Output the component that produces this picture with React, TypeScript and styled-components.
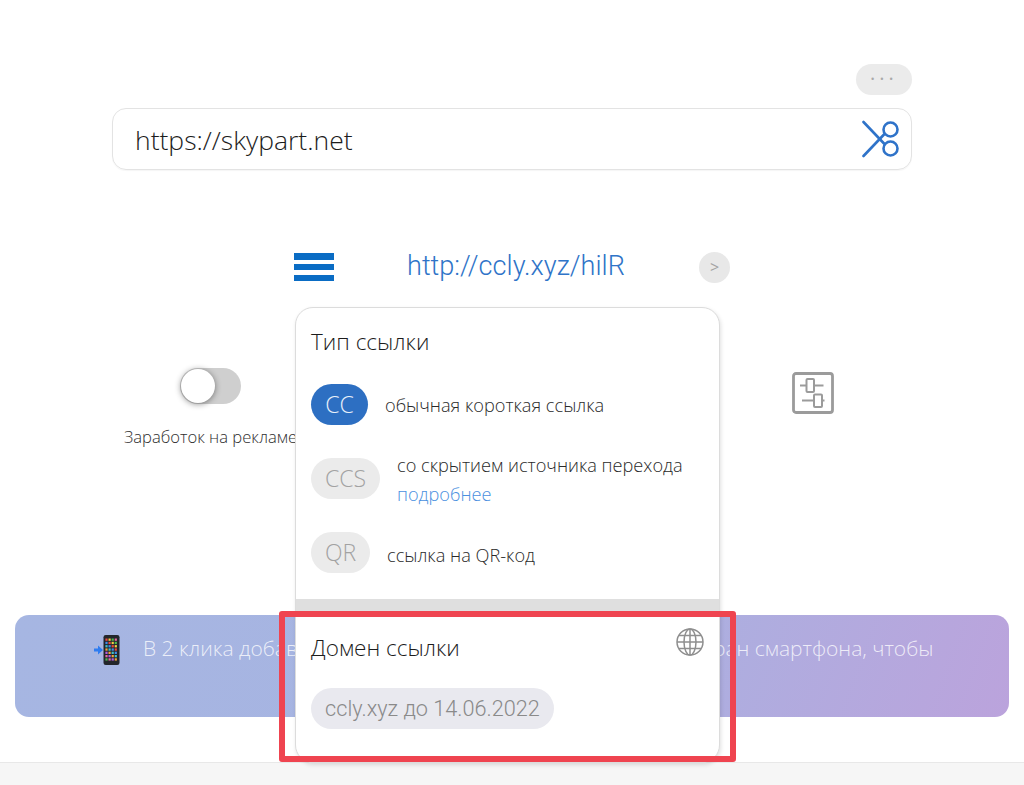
import React from 'react';
import styled, { createGlobalStyle } from 'styled-components';

const GlobalStyle = createGlobalStyle`
  html, body {
    margin: 0;
    padding: 0;
    background: #ffffff;
    font-family: "Open Sans", "Liberation Sans", sans-serif;
    font-weight: 300;
  }
  * {
    box-sizing: border-box;
  }
`

const ScissorsIcon = () => (
  <svg width="38" height="38" viewBox="0 0 38 38" fill="none" stroke="#2f73c9" strokeWidth="2.6" strokeLinecap="round">
    <path d="M1.5 2 L22 23.5" />
    <path d="M1.5 36 L22 14.5" />
    <circle cx="28.5" cy="9.5" r="7" />
    <circle cx="28.5" cy="28.5" r="7" />
  </svg>
)

const SlidersIcon = () => (
  <svg width="42" height="42" viewBox="0 0 42 42" fill="none" stroke="#9b9b9b">
    <rect x="1.5" y="1.5" width="39" height="39" rx="2.5" strokeWidth="2.8" />
    <path d="M8 13.5 H14.5 M22 13.5 H31.5 M10 28.5 H22 M30 28.5 H32.5" strokeWidth="2" />
    <rect x="14.5" y="7" width="7.5" height="13" rx="1" strokeWidth="2" />
    <rect x="22" y="22.5" width="8" height="12.5" rx="1" strokeWidth="2" />
  </svg>
)

const GlobeIcon = () => (
  <svg width="28" height="28" viewBox="0 0 28 28" fill="none" stroke="#8f8f8f" strokeWidth="1.5">
    <circle cx="14" cy="14" r="13" />
    <ellipse cx="14" cy="14" rx="6" ry="13" />
    <path d="M14 1 V27 M1 14 H27 M3 7.5 H25 M3 20.5 H25" />
  </svg>
)

const PhoneEmoji = () => {
  const colors = ['#e8483f', '#f2a33a', '#4fb84f', '#3f8be8', '#b05ce0', '#f0d040', '#40c0c8', '#e86aa0']
  const cells = []
  for (let row = 0; row < 7; row++) {
    for (let col = 0; col < 4; col++) {
      cells.push(
        <rect
          key={`${row}-${col}`}
          x={12.4 + col * 3.1}
          y={4.5 + row * 3.3}
          width="2.2"
          height="2.3"
          fill={colors[(row * 3 + col * 5) % colors.length]}
        />
      )
    }
  }
  return (
    <svg width="30" height="32" viewBox="0 0 30 32">
      <path d="M1 14.5 H5 V11.5 L10 16 L5 20.5 V17.5 H1 Z" fill="#2f7df0" />
      <rect x="10.5" y="1" width="16" height="30" rx="2.2" fill="#23262b" />
      {cells}
    </svg>
  )
}

export default function App() {
  return (
    <Page>
      <GlobalStyle />
      <Main>
        <MoreRow>
          <MoreButton>···</MoreButton>
        </MoreRow>
        <UrlBox>
          <UrlText>https://skypart.net</UrlText>
          <ScissorsIcon />
        </UrlBox>
        <ResultRow>
          <Burger>
            <span />
            <span />
            <span />
          </Burger>
          <ShortLink>http://ccly.xyz/hilR</ShortLink>
          <NextButton>&gt;</NextButton>
        </ResultRow>
      </Main>

      <OptionsRow>
        <ToggleColumn>
          <Toggle>
            <Knob />
          </Toggle>
          <ToggleLabel>Заработок на рекламе</ToggleLabel>
        </ToggleColumn>
        <SlidersSlot>
          <SlidersIcon />
        </SlidersSlot>
      </OptionsRow>

      <Banner>
        <PhoneEmoji />
        <BannerText>В 2 клика добавьте значок нашего сервиса на главный экран смартфона, чтобы</BannerText>
      </Banner>

      <Footer />

      <Dropdown>
        <TypeSection>
          <SectionTitle>Тип ссылки</SectionTitle>
          <TypeRow $top={26}>
            <Pill $active $width={57}>CC</Pill>
            <TypeText $gap={17} $shift={1}>обычная короткая ссылка</TypeText>
          </TypeRow>
          <TypeRow $top={22}>
            <Pill $width={69}>CCS</Pill>
            <TypeText $gap={17} $shift={4}>
              со скрытием источника перехода
              <br />
              <MoreLink>подробнее</MoreLink>
            </TypeText>
          </TypeRow>
          <TypeRow $top={23}>
            <Pill $width={59}>QR</Pill>
            <TypeText $gap={17} $shift={5}>ссылка на QR-код</TypeText>
          </TypeRow>
        </TypeSection>
        <Divider />
        <DomainSection>
          <DomainHead>
            <SectionTitle>Домен ссылки</SectionTitle>
            <GlobeIcon />
          </DomainHead>
          <DomainPill>ccly.xyz до 14.06.2022</DomainPill>
        </DomainSection>
      </Dropdown>

      <Highlight />
    </Page>
  );
}

const Page = styled.div`
  position: relative;
  width: 1024px;
  height: 785px;
  overflow: hidden;
  background: #ffffff;
`
const Main = styled.div`
  width: 800px;
  margin: 0 auto;
  padding-top: 64px;
`
const MoreRow = styled.div`
  display: flex;
  justify-content: flex-end;
`
const MoreButton = styled.div`
  width: 56px;
  height: 31px;
  border-radius: 16px;
  background: #ebebeb;
  color: #a9a9a9;
  font-size: 20px;
  font-weight: 400;
  line-height: 29px;
  letter-spacing: 4px;
  text-align: center;
`
const UrlBox = styled.div`
  height: 62px;
  margin-top: 13px;
  padding: 0 11px 0 22px;
  display: flex;
  align-items: center;
  justify-content: space-between;
  border: 1px solid #e3e3e3;
  border-radius: 14px;
  box-shadow: 0 1px 1px rgba(0, 0, 0, 0.04);
`
const UrlText = styled.div`
  font-size: 26.5px;
  line-height: 38px;
  padding-top: 1px;
  color: #1c1c1c;
`
const ResultRow = styled.div`
  height: 36px;
  margin-top: 79px;
  padding-left: 182px;
  display: flex;
  align-items: center;
`
const Burger = styled.div`
  width: 40px;
  height: 28px;
  display: flex;
  flex-direction: column;
  justify-content: space-between;

  span {
    display: block;
    height: 6.5px;
    background: #0a6cc4;
  }
`
const ShortLink = styled.div`
  width: 218px;
  margin-left: 73px;
  font-family: Roboto, "Liberation Sans", sans-serif;
  font-weight: 300;
  font-size: 27.1px;
  line-height: 34px;
  margin-top: -3px;
  white-space: nowrap;
  color: #2f74c8;
`
const NextButton = styled.div`
  width: 31px;
  height: 31px;
  margin-left: 74px;
  border-radius: 50%;
  background: #e8e8e8;
  color: #a3a3a3;
  font-size: 16px;
  font-weight: 400;
  line-height: 30px;
  text-align: center;
`
const OptionsRow = styled.div`
  height: 330px;
  margin-top: 83px;
  padding-left: 124px;
  padding-right: 190px;
  display: flex;
  align-items: flex-start;
  justify-content: space-between;
`
const ToggleColumn = styled.div`
  display: flex;
  flex-direction: column;
  align-items: center;
  gap: 21px;
`
const Toggle = styled.div`
  width: 61px;
  height: 36px;
  margin-right: 1px;
  border-radius: 18px;
  background: #cfcfcf;
  position: relative;
`
const Knob = styled.div`
  position: absolute;
  left: 1px;
  top: 1px;
  width: 34px;
  height: 34px;
  border-radius: 50%;
  background: #ffffff;
  box-shadow: 0 1px 6px rgba(0, 0, 0, 0.45);
`
const ToggleLabel = styled.div`
  font-size: 16.6px;
  color: #2e2e2e;
  white-space: nowrap;
`
const SlidersSlot = styled.div`
  margin-top: 4px;
`
const Banner = styled.div`
  width: 994px;
  height: 102px;
  margin: -83px 0 0 15px;
  padding: 19px 0 0 78px;
  display: flex;
  align-items: flex-start;
  gap: 20px;
  border-radius: 14px;
  background: linear-gradient(110deg, #a6b6e2 0%, #a7b3e1 55%, #bba3dc 100%);
  position: relative;
`
const BannerText = styled.div`
  font-size: 21px;
  line-height: 28px;
  color: rgba(255, 255, 255, 0.78);
  white-space: nowrap;
`
const Footer = styled.div`
  height: 30px;
  margin-top: 45px;
  background: #f6f6f6;
  border-top: 1px solid #e8e8e8;
`
const Dropdown = styled.div`
  position: absolute;
  left: 295px;
  top: 307px;
  width: 425px;
  height: 456px;
  background: #ffffff;
  border: 1px solid #dcdcdc;
  border-radius: 18px;
  box-shadow: 1px 2px 4px rgba(0, 0, 0, 0.12);
  overflow: hidden;
`
const TypeSection = styled.div`
  height: 291px;
  padding: 18px 15px 0;
`
const SectionTitle = styled.div`
  font-size: 22.5px;
  line-height: 32px;
  color: #1c1c1c;
`
const TypeRow = styled.div<{ $top: number }>`
  margin-top: ${props => props.$top}px;
  display: flex;
  align-items: center;
`
const Pill = styled.div<{ $active?: boolean; $width: number }>`
  flex: none;
  width: ${props => props.$width}px;
  height: 41px;
  border-radius: 21px;
  background: ${props => props.$active ? '#2d6fc2' : '#ebebeb'};
  color: ${props => props.$active ? '#e8f0fa' : '#a2a2a2'};
  font-size: 23px;
  line-height: 40px;
  text-align: center;
`
const TypeText = styled.div<{ $gap: number; $shift: number }>`
  margin-left: ${props => props.$gap}px;
  margin-top: ${props => props.$shift}px;
  font-size: 18.2px;
  line-height: 29px;
  color: #2a2a2a;
  white-space: nowrap;
`
const MoreLink = styled.span`
  color: #4a90e0;
`
const Divider = styled.div`
  height: 15px;
  background: #dfdfdf;
`
const DomainSection = styled.div`
  padding: 18px 15px 0;
`
const DomainHead = styled.div`
  display: flex;
  justify-content: space-between;
  align-items: flex-start;

  svg {
    margin-top: -4px;
  }
`
const DomainPill = styled.div`
  width: 243px;
  height: 41px;
  margin-top: 24px;
  border-radius: 21px;
  background: #e9e9ef;
  color: #8a8a8a;
  font-family: Roboto, "Liberation Sans", sans-serif;
  font-weight: 300;
  font-size: 21.7px;
  line-height: 41px;
  text-align: center;
`
const Highlight = styled.div`
  position: absolute;
  left: 279px;
  top: 611px;
  width: 457px;
  height: 151px;
  border: 6px solid #ef4450;
  border-radius: 3px;
`
